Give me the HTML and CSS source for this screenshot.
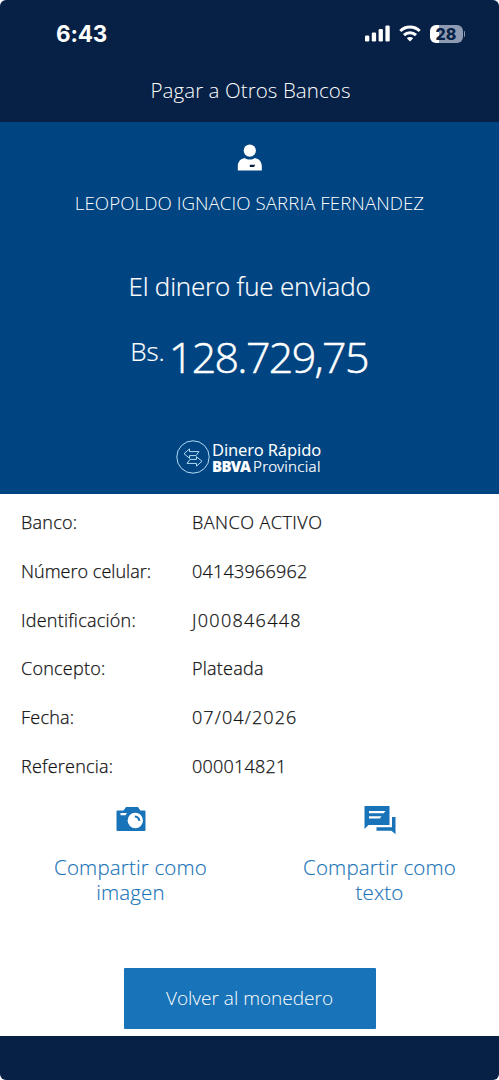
FILE: index.html
```html
<!DOCTYPE html>
<html lang="es">
<head>
<meta charset="utf-8">
<meta name="viewport" content="width=device-width, initial-scale=1">
<title>Pagar a Otros Bancos</title>
<link rel="stylesheet" href="styles.css">
</head>
<body>
<div class="screen">
  <header class="top">
    <div class="status">
      <span class="clock">6:43</span>
      <div class="status-icons">
        <svg width="25" height="17" viewBox="0 0 25 17" fill="#fff"><rect x="0" y="10.500" width="4.300" height="6" rx="1.200"/><rect x="6.800" y="7.500" width="4.300" height="9" rx="1.200"/><rect x="13.600" y="4" width="4.300" height="12.500" rx="1.200"/><rect x="20.400" y="0.500" width="4.300" height="16" rx="1.200"/></svg>
        <svg width="22" height="17" viewBox="0 0 22 17" fill="none" stroke="#fff" stroke-width="3"><path d="M1.300 6a13.800 13.800 0 0 1 19.400 0"/><path d="M5 10.100a8.600 8.600 0 0 1 12 0"/><path d="M11 16.500l-3.200-3.300a4.600 4.600 0 0 1 6.400 0z" fill="#fff" stroke="none"/></svg>
        <div class="battery"><span class="level">28</span><span class="nub"></span></div>
      </div>
    </div>
    <h1 class="title">Pagar a Otros Bancos</h1>
  </header>
  <section class="hero">
    <svg width="26" height="28" viewBox="0 0 26 28"><circle cx="12.800" cy="6.600" r="6.100" fill="#fff"/><path d="M.8 26.500v-4c0-4.700 2.500-7.700 7-8.500 1.500 1.200 3 1.600 5 1.600s3.500-.4 5-1.600c4.500.8 7 3.800 7 8.500v4z" fill="#fff"/><path d="M12.800 20.700h5.500l-1.300 2.300h-4.200z" fill="#072146"/></svg>
    <p class="name">LEOPOLDO IGNACIO SARRIA FERNANDEZ</p>
    <p class="sent">El dinero fue enviado</p>
    <p class="amount"><span class="currency">Bs.</span><span class="figure">128.729,75</span></p>
    <div class="brand">
      <svg width="34" height="35" viewBox="0 0 34 35" fill="none" stroke="#b4dcf5" stroke-width="1"><circle cx="17" cy="17" r="16.200"/><path d="M8 13.700l5.500-4.800v2.700h9.500l-3 4h-6.500v2.700z"/><path d="M26 21.300l-5.500 4.800v-2.700h-9.500l3-4h6.500v-2.700z"/></svg>
      <div class="brand-text">
        <span class="product">Dinero Rápido</span>
        <span class="bank"><b class="bbva">BBVA</b><span class="provincial">Provincial</span></span>
      </div>
    </div>
  </section>
  <main class="content">
    <dl class="details">
      <dt>Banco:</dt><dd class="bank-name">BANCO ACTIVO</dd>
      <dt class="phone-label">Número celular:</dt><dd>04143966962</dd>
      <dt>Identificación:</dt><dd class="id-number">J000846448</dd>
      <dt>Concepto:</dt><dd>Plateada</dd>
      <dt>Fecha:</dt><dd class="date">07/04/2026</dd>
      <dt>Referencia:</dt><dd>000014821</dd>
    </dl>
    <div class="share">
      <a class="option">
        <svg width="32" height="30" viewBox="0 0 32 30"><path d="M1.500 6.500q0-1 1-1h6l2.500-3.500h12l2.300 3.500h4.200q1 0 1 1v18.500q0 1-1 1h-27q-1 0-1-1z" fill="#1973b8"/><path d="M5.500 8h6.500l-1.500 2.200h-5z" fill="#fff"/><circle cx="20.300" cy="15.500" r="7.700" fill="#fff"/><path d="M19.800 11.400a4.800 4.800 0 0 1 4.500 4.400" fill="none" stroke="#1973b8" stroke-width="2"/></svg>
        <span>Compartir como<br>imagen</span>
      </a>
      <a class="option">
        <svg width="32" height="30" viewBox="0 0 32 30"><path d="M.5 1h25v19h-21l-4 4z" fill="#1973b8"/><path d="M5 6h16.500l-1.700 2.300h-14.800zM5 11.200h12.500l-1.700 2.300h-10.800z" fill="#fff"/><path d="M28 12h3.500v17.200l-4-3.400h-15v-3.600h15.500z" fill="#1973b8"/></svg>
        <span>Compartir como<br>texto</span>
      </a>
    </div>
    <button class="back">Volver al monedero</button>
  </main>
  <footer class="bottom"></footer>
</div>
</body>
</html>
```
FILE: styles.css
```css
* { box-sizing: border-box; }
body { margin: 0; background: #fff; font-family: "Open Sans", "Noto Sans", sans-serif; font-weight: 300; }
.screen { width: 499px; height: 1080px; display: flex; flex-direction: column; overflow: hidden; border-radius: 6px; }

.top { height: 122px; background: #072146; color: #fff; }
.status { height: 67px; padding: 0 34px 0 56px; display: flex; justify-content: space-between; align-items: center; }
.clock { font: 700 22.500px "Inter", sans-serif; letter-spacing: -0.200px; }
.status-icons { display: flex; align-items: center; gap: 9px; }
.battery { display: flex; align-items: center; gap: 1px; }
.level { width: 33px; height: 18px; border-radius: 6px; background: linear-gradient(90deg, #fff 9px, #8f9bb3 9px); color: #072146; font: 800 16px/18px "Inter", sans-serif; text-align: center; }
.nub { width: 1.500px; height: 6px; border-radius: 0 2px 2px 0; background: #8f9bb3; }
.title { margin: 0; padding-left: 2px; font-size: 20.500px; line-height: 46px; font-weight: 300; letter-spacing: 0.090px; text-align: center; }

.hero { height: 372px; background: #004481; color: #fff; display: flex; flex-direction: column; align-items: center; padding-top: 22px; }
.hero p { margin: 0; }
.name { font-size: 18.700px; line-height: 30px; padding-top: 16px; letter-spacing: 0.060px; }
.sent { font-size: 26px; line-height: 36px; padding-top: 50px; letter-spacing: -0.200px; -webkit-text-stroke: 0.200px; }
.amount { display: flex; padding: 22px 1px 0 0; gap: 4px; }
.currency { font-size: 26px; line-height: 51px; -webkit-text-stroke: 0.200px; }
.figure { font-size: 43px; line-height: 61px; letter-spacing: -1.680px; -webkit-text-stroke: 0.500px; }
.brand { display: flex; gap: 2px; margin-top: 53px; margin-right: 2px; }
.brand-text { display: flex; flex-direction: column; padding-top: 2px; line-height: 16px; font-family: "Noto Sans", sans-serif; }
.product { font-size: 16.500px; font-weight: 400; letter-spacing: -0.120px; }
.bank { display: flex; gap: 3px; font-size: 15px; font-weight: 300; }
.bbva { font-weight: 900; letter-spacing: -0.700px; }
.provincial { letter-spacing: 0.300px; -webkit-text-stroke: 0.200px; }

.content { height: 542px; display: flex; flex-direction: column; align-items: center; background: #fff; }
.details { margin: 0; padding: 4px 21px 0; width: 100%; display: grid; grid-template-columns: 171px 1fr; grid-auto-rows: 48.700px; align-items: center; font-size: 18px; letter-spacing: 0.230px; color: #121212; -webkit-text-stroke: 0.250px; }
.details dd { margin: 0; }
.details .phone-label { letter-spacing: 0.030px; }
.details .bank-name { letter-spacing: 0.470px; }
.details .id-number { letter-spacing: 1.300px; }
.details .date { letter-spacing: 1.100px; }
.share { width: 498px; margin: 15px -5px 0 6px; display: flex; color: #1973b8; }
.option { flex: 1; display: flex; flex-direction: column; align-items: center; gap: 20px; font-size: 20.500px; line-height: 25px; letter-spacing: 0.170px; text-align: center; -webkit-text-stroke: 0.150px; }
.back { width: 252px; height: 61px; margin-top: 63px; padding: 0 0 2px; border: 0; border-radius: 1px; background: #1973b8; color: #fff; font: 300 19px "Open Sans", sans-serif; }
.bottom { flex: 1; background: #072146; }
```
